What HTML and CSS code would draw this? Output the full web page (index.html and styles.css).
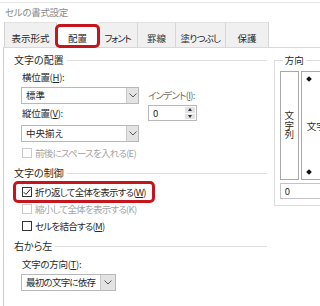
FILE: index.html
```html
<!DOCTYPE html>
<html lang="ja">
<head>
<meta charset="utf-8">
<title>セルの書式設定</title>
<link rel="stylesheet" href="styles.css">
</head>
<body>
<div class="dialog">
  <div class="titlebar">セルの書式設定</div>
  <div class="tabs">
    <div class="tab t1">表示形式</div>
    <div class="tab t2 active">配置</div>
    <div class="tab t3 n3">フォント</div>
    <div class="tab t4">罫線</div>
    <div class="tab t5 n2">塗りつぶし</div>
    <div class="tab t6">保護</div>
  </div>
  <div class="panel">
    <div class="main">
      <div class="ghead"><span>文字の配置</span><i class="rule"></i></div>
      <div class="align">
        <div class="col-left">
          <div class="lbl n1">横位置(<u>H</u>):</div>
          <div class="select s1"><span class="val">標準</span><span class="btn"><svg width="8" height="5" viewBox="0 0 8 5"><path d="M0.5 0.5 L4 4 L7.5 0.5" fill="none" stroke="#5a5a5a"/></svg></span></div>
          <div class="lbl l2 n1">縦位置(<u>V</u>):</div>
          <div class="select s1"><span class="val">中央揃え</span><span class="btn"><svg width="8" height="5" viewBox="0 0 8 5"><path d="M0.5 0.5 L4 4 L7.5 0.5" fill="none" stroke="#5a5a5a"/></svg></span></div>
        </div>
        <div class="col-indent">
          <div class="lbl dim n2">インデント(<u>I</u>):</div>
          <div class="spin"><span class="val">0</span><span class="spin-btns"><i class="up"></i><i class="down"></i></span></div>
        </div>
      </div>
      <div class="check disabled c-space"><i class="box"></i><span class="n2">前後にスペースを入れる(E)</span></div>
      <div class="ghead g2"><span>文字の制御</span><i class="rule"></i></div>
      <div class="check highlight"><i class="box"><svg width="8" height="8" viewBox="0 0 8 8"><path d="M0.8 4.2 L3 6.4 L7.2 1.4" fill="none" stroke="#1e1e1e" stroke-width="1"/></svg></i><span class="n2">折り返して全体を表示する(<u>W</u>)</span></div>
      <div class="check disabled c-shrink"><i class="box"></i><span class="n2">縮小して全体を表示する(K)</span></div>
      <div class="check c-merge"><i class="box"></i><span class="n2">セルを結合する(<u>M</u>)</span></div>
      <div class="ghead g3"><span>右から左</span><i class="rule"></i></div>
      <div class="lbl l3 n1">文字の方向(<u>T</u>):</div>
      <div class="select s3"><span class="val n2">最初の文字に依存</span><span class="btn"><svg width="8" height="5" viewBox="0 0 8 5"><path d="M0.5 0.5 L4 4 L7.5 0.5" fill="none" stroke="#5a5a5a"/></svg></span></div>
    </div>
    <div class="side">
      <fieldset class="orient">
        <legend>方向</legend>
        <div class="boxes">
          <div class="vbox"><span class="vtext">文字列</span></div>
          <div class="dial">
            <i class="dot"></i>
            <span class="htext">文字列</span>
            <i class="dot"></i>
          </div>
        </div>
        <div class="deg">0</div>
      </fieldset>
    </div>
  </div>
</div>
</body>
</html>
```

FILE: styles.css
```css
html, body {
  margin: 0;
  padding: 0;
  width: 320px;
  height: 306px;
  overflow: hidden;
  background: #fff;
}
body {
  font-family: "Noto Sans CJK JP", "Noto Sans", sans-serif;
  font-size: 9.5px;
  line-height: 12px;
  color: #2a2a2a;
  font-feature-settings: "palt" 1;
  white-space: nowrap;
}
.n1 { letter-spacing: -0.3px; }
.n2 { letter-spacing: -0.75px; }
.n3 { letter-spacing: -1.3px; }
.dialog {
  width: 345px;
  margin-top: 2px;
  border-top: 1px solid #e4e4e4;
}
.titlebar {
  height: 19px;
  line-height: 19px;
  padding-left: 5px;
  color: #8a8a8a;
  font-size: 9.5px;
  letter-spacing: -0.3px;
}
.tabs {
  display: flex;
  height: 25px;
  margin-left: 4px;
}
.tab {
  display: flex;
  align-items: center;
  justify-content: center;
  height: 25px;
  box-sizing: border-box;
  background: #f0f0f0;
  border-top: 1px solid #e2e2e2;
  border-right: 1px solid #d6d6d6;
  padding-top: 6px;
}
.t1 { width: 53px; border-left: 1px solid #d6d6d6; }
.t3 { width: 40px; }
.t4 { width: 38px; }
.t5 { width: 50px; }
.t6 { width: 43px; }
.tab.active {
  background: #fff;
  position: relative;
  z-index: 2;
  border: 3px solid #c4161c;
  border-radius: 5px;
  padding-top: 4px;
  width: 45px;
  margin-left: -2px;
  margin-right: -2px;
  margin-top: 2px;
  height: 24px;
}
.panel {
  display: flex;
  border-top: 1px solid #d9d9d9;
  border-left: 1px solid #cfcfcf;
  margin-left: 3px;
  height: 260px;
}
.main {
  width: 266px;
  padding-top: 6px;
  display: flex;
  flex-direction: column;
}
.ghead {
  display: flex;
  align-items: center;
  padding-left: 10px;
  height: 12px;
  font-size: 10px;
}
.ghead span { margin-right: 3px; }
.rule {
  flex: 1;
  height: 1px;
  background: #dedede;
}
.lbl { height: 12px; }
u { text-decoration: underline; text-underline-offset: 1px; }
.align {
  display: flex;
  margin-top: 5px;
  margin-left: 17px;
  gap: 9px;
}
.col-left {
  display: flex;
  flex-direction: column;
  width: 118px;
}
.col-left .lbl { padding-left: 1px; }
.select {
  display: flex;
  align-items: stretch;
  box-sizing: border-box;
  height: 17px;
  border: 1px solid #b8b8b8;
  background: #fff;
}
.select .val {
  flex: 1;
  padding-left: 4px;
  line-height: 15px;
}
.select .btn {
  width: 11px;
  display: flex;
  align-items: center;
  justify-content: center;
  background: #e3e3e3;
  border-left: 1px solid #c9c9c9;
}
.col-left .lbl:first-child { margin-bottom: 4px; }
.col-left .l2 { margin-top: 3px; margin-bottom: 6px; }
.col-indent {
  display: flex;
  flex-direction: column;
  padding-top: 18px;
  width: 49px;
}
.dim { color: #6e6e6e; }
.spin {
  margin-top: 4px;
  display: flex;
  box-sizing: border-box;
  height: 16px;
  border: 1px solid #b8b8b8;
}
.spin .val { flex: 1; padding-left: 4px; line-height: 14px; }
.spin-btns {
  width: 10px;
  display: flex;
  flex-direction: column;
  margin: 1px;
  gap: 1px;
}
.spin-btns i {
  flex: 1;
  background: #e3e3e3;
  display: flex;
  align-items: center;
  justify-content: center;
}
.spin-btns i::after {
  content: "";
  border-left: 2.5px solid transparent;
  border-right: 2.5px solid transparent;
}
.spin-btns .up::after { border-bottom: 3px solid #333; }
.spin-btns .down::after { border-top: 3px solid #333; }
.check {
  display: flex;
  align-items: center;
  height: 12px;
  padding-left: 18px;
  gap: 3px;
}
.box {
  width: 10px;
  height: 10px;
  flex: none;
  box-sizing: border-box;
  border: 1px solid #333;
  background: #fff;
  display: flex;
  align-items: center;
  justify-content: center;
}
.disabled { color: #a3a3a3; }
.disabled .box { border-color: #cccccc; }
.c-space { margin-top: 5px; }
.g2 { margin-top: 8px; }
.highlight {
  margin-top: 2px;
  margin-left: 9px;
  width: 142px;
  height: 22px;
  box-sizing: border-box;
  border: 3px solid #c4161c;
  border-radius: 5px;
  padding-left: 6px;
}
.c-shrink { margin-top: 0px; }
.c-merge { margin-top: 5px; }
.g3 { margin-top: 8px; }
.l3 { margin-top: 6px; padding-left: 18px; }
.s3 {
  margin-top: 4px;
  margin-left: 17px;
  width: 95px;
}
.s3 .btn { width: 14px; }
.side {
  margin-left: 7px;
  width: 72px;
  padding-top: 6px;
}
.orient {
  margin: 0;
  padding: 5px 0 6px 5px;
  border: 1px solid #dcdcdc;
  border-right: none;
  height: 152px;
  box-sizing: border-box;
  display: flex;
  flex-direction: column;
}
.orient legend {
  padding: 0 2px;
  margin-left: 3px;
  line-height: 12px;
}
.boxes {
  display: flex;
  gap: 2px;
  height: 116px;
}
.vbox {
  width: 19px;
  box-sizing: border-box;
  border: 1px solid #a8a8a8;
  display: flex;
  align-items: center;
  justify-content: center;
}
.vtext {
  writing-mode: vertical-rl;
  line-height: 10px;
}
.dial {
  flex: 1;
  box-sizing: border-box;
  border: 1px solid #a8a8a8;
  display: flex;
  flex-direction: column;
  justify-content: space-between;
  padding: 5px 0 5px 5px;
  overflow: hidden;
}
.dot {
  width: 4px;
  height: 4px;
  background: #111;
  transform: rotate(45deg);
}
.htext { line-height: 12px; }
.deg {
  margin-top: 3px;
  height: 16px;
  box-sizing: border-box;
  border: 1px solid #c4c4c4;
  padding-left: 4px;
  line-height: 14px;
}
```
